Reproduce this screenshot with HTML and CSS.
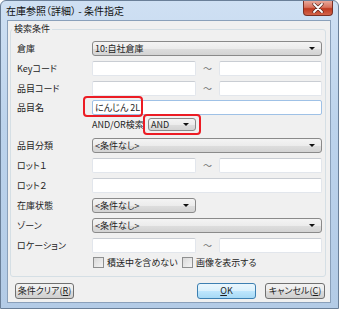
FILE: index.html
```html
<!DOCTYPE html>
<html lang="ja">
<head>
  <meta charset="UTF-8" />
  <title>在庫参照（詳細） - 条件指定</title>
  <link rel="stylesheet" href="styles.css">
</head>
<body>

  <div class="window">
    <div class="titlebar">
      <span class="title">在庫参照（詳細） - 条件指定</span>
      <span class="close-btn">
        <svg width="12" height="10" viewBox="0 0 12 10">
          <path d="M2 1 L10 9 M10 1 L2 9" stroke="#5a2a22" stroke-width="3.2" stroke-linecap="round" />
          <path d="M2 1 L10 9 M10 1 L2 9" stroke="#fff" stroke-width="1.8" stroke-linecap="round" />
        </svg>
      </span>
    </div>

    <div class="client">
      <fieldset class="group">
        <legend>検索条件</legend>

        <div class="row">
          <span class="label">倉庫</span>
          <div class="combo">10:自社倉庫</div>
        </div>

        <div class="row">
          <span class="label">Keyコード</span>
          <div class="range">
            <div class="textbox"></div>
            <span class="tilde">～</span>
            <div class="textbox"></div>
          </div>
        </div>

        <div class="row">
          <span class="label">品目コード</span>
          <div class="range">
            <div class="textbox"></div>
            <span class="tilde">～</span>
            <div class="textbox"></div>
          </div>
        </div>

        <div class="row row-name">
          <span class="label">品目名</span>
          <div class="textbox focused">
            にんじん 2L
            <span class="mark mark-name"></span>
          </div>
        </div>

        <div class="row row-andor">
          <span class="label"></span>
          <span class="andor-label">AND/OR検索</span>
          <div class="combo combo-and">
            AND
            <span class="mark mark-and"></span>
          </div>
        </div>

        <div class="row">
          <span class="label">品目分類</span>
          <div class="combo">&lt;条件なし&gt;</div>
        </div>

        <div class="row">
          <span class="label">ロット１</span>
          <div class="range">
            <div class="textbox"></div>
            <span class="tilde">～</span>
            <div class="textbox"></div>
          </div>
        </div>

        <div class="row">
          <span class="label">ロット２</span>
          <div class="textbox"></div>
        </div>

        <div class="row">
          <span class="label">在庫状態</span>
          <div class="combo combo-half">&lt;条件なし&gt;</div>
        </div>

        <div class="row">
          <span class="label">ゾーン</span>
          <div class="combo">&lt;条件なし&gt;</div>
        </div>

        <div class="row">
          <span class="label">ロケーション</span>
          <div class="range">
            <div class="textbox"></div>
            <span class="tilde">～</span>
            <div class="textbox"></div>
          </div>
        </div>

        <div class="row row-checks">
          <span class="label"></span>
          <label class="check check-first"><span class="box"></span>積送中を含めない</label>
          <label class="check"><span class="box"></span>画像を表示する</label>
        </div>
      </fieldset>

      <div class="buttons">
        <div class="btn">条件クリア(<u>R</u>)</div>
        <div class="btn btn-ok"><u>O</u>K</div>
        <div class="btn btn-cancel">キャンセル(<u>C</u>)</div>
      </div>
    </div>
  </div>

</body>
</html>
```

FILE: styles.css
```css
body {
  margin: 0;
  font-family: "Noto Sans CJK JP", "Noto Sans", sans-serif;
  font-size: 9px;
  font-feature-settings: "palt";
  color: #1e1e1e;
}

/* окно в стиле Windows 7 */
.window {
  width: 339px;
  height: 309px;
  box-sizing: border-box;
  border: 1px solid #6a7f98;
  border-radius: 6px 6px 0 0;
  background: linear-gradient(to bottom, #cfe0f3, #bcd3ec 40%, #b3cbe6);
  display: flex;
  flex-direction: column;
}

.titlebar {
  height: 19px;
  display: flex;
  align-items: flex-start;
}

.title {
  margin: 3px 0 0 5px;
  font-size: 10px;
  line-height: 13px;
  color: #111;
}

.close-btn {
  margin-left: auto;
  margin-right: 5px;
  width: 30px;
  height: 15px;
  box-sizing: border-box;
  border: 1px solid #7a3024;
  border-top: none;
  border-radius: 0 0 4px 4px;
  background: linear-gradient(to bottom, #e9a89a, #d8725d 45%, #c0391f 55%, #d2644a);
  display: flex;
  align-items: center;
  justify-content: center;
}

.client {
  flex: 1;
  margin: 0 7px 5px 6px;
  border: 1px solid #8aa0ba;
  background: #f0f0f0;
  display: flex;
  flex-direction: column;
}

.group {
  margin: 2px 4px 0 2px;
  padding: 3px 3px 6px 6px;
  border: 1px solid #d5dfe5;
  border-radius: 3px;
  min-width: 0;
}

.group legend {
  margin-left: -5px;
  padding: 0 2px;
  line-height: 12px;
}

.row {
  display: flex;
  align-items: center;
  height: 20px;
}

.row-name { height: 18px; }
.row-andor { height: 16px; margin-bottom: 3px; }
.row-checks { height: 15px; }

.label {
  width: 75px;
  flex: none;
}

.range {
  flex: 1;
  display: flex;
  align-items: center;
}

.range .textbox {
  flex: none;
  width: 104px;
}

.range .textbox:last-child { width: 103px; }

.tilde {
  flex: 1;
  text-align: center;
  color: #707070;
}

.textbox {
  flex: 1;
  position: relative;
  height: 15px;
  box-sizing: border-box;
  background: #fff;
  border: 1px solid #e2e6ec;
  border-top-color: #c9cdd3;
  border-radius: 2px;
  padding-left: 2px;
  line-height: 13px;
}

.textbox.focused {
  border-color: #9fc1e6;
}

.combo {
  flex: 1;
  position: relative;
  height: 15px;
  box-sizing: border-box;
  border: 1px solid #8a8a8a;
  border-radius: 3px;
  background: linear-gradient(to bottom, #f4f4f4, #ececec 50%, #dedede 51%, #d3d3d3);
  padding-left: 2px;
  line-height: 13px;
}

.combo::after {
  content: "";
  position: absolute;
  right: 6px;
  top: 5px;
  border-left: 3px solid transparent;
  border-right: 3px solid transparent;
  border-top: 3px solid #111;
}

.combo-half {
  flex: none;
  width: 104px;
}

.andor-label {
  width: 56px;
  flex: none;
}

.combo-and {
  flex: none;
  width: 48px;
  height: 13px;
  line-height: 11px;
}

.combo-and::after { top: 4px; }

/* красные рамки поверх полей */
.mark {
  position: absolute;
  box-sizing: border-box;
  border: 2px solid #ec1c24;
  border-radius: 4px;
}

.mark-name {
  left: -10px;
  top: -5px;
  width: 60px;
  height: 21px;
}

.mark-and {
  left: -6px;
  top: -5px;
  width: 58px;
  height: 21px;
}

.check {
  display: flex;
  align-items: center;
  margin-left: 1px;
}

.check-first { width: 88px; }

.box {
  width: 9px;
  height: 9px;
  margin-right: 3px;
  border: 1px solid #8e8f8f;
  background: linear-gradient(135deg, #d9d9d9, #f4f4f4);
}

.buttons {
  display: flex;
  margin: 6px 5px 0 7px;
}

.btn {
  width: 59px;
  height: 16px;
  box-sizing: border-box;
  border: 1px solid #707070;
  border-radius: 3px;
  background: linear-gradient(to bottom, #f2f2f2, #ebebeb 50%, #dddddd 51%, #cfcfcf);
  text-align: center;
  line-height: 14px;
}

.btn-ok {
  margin-left: auto;
  border-color: #3c7fb1;
  background: linear-gradient(to bottom, #eaf6fd, #d9f0fc 50%, #bee6fd 51%, #a7d9f5);
}

.btn-cancel {
  width: 60px;
  margin-left: 9px;
}
```
